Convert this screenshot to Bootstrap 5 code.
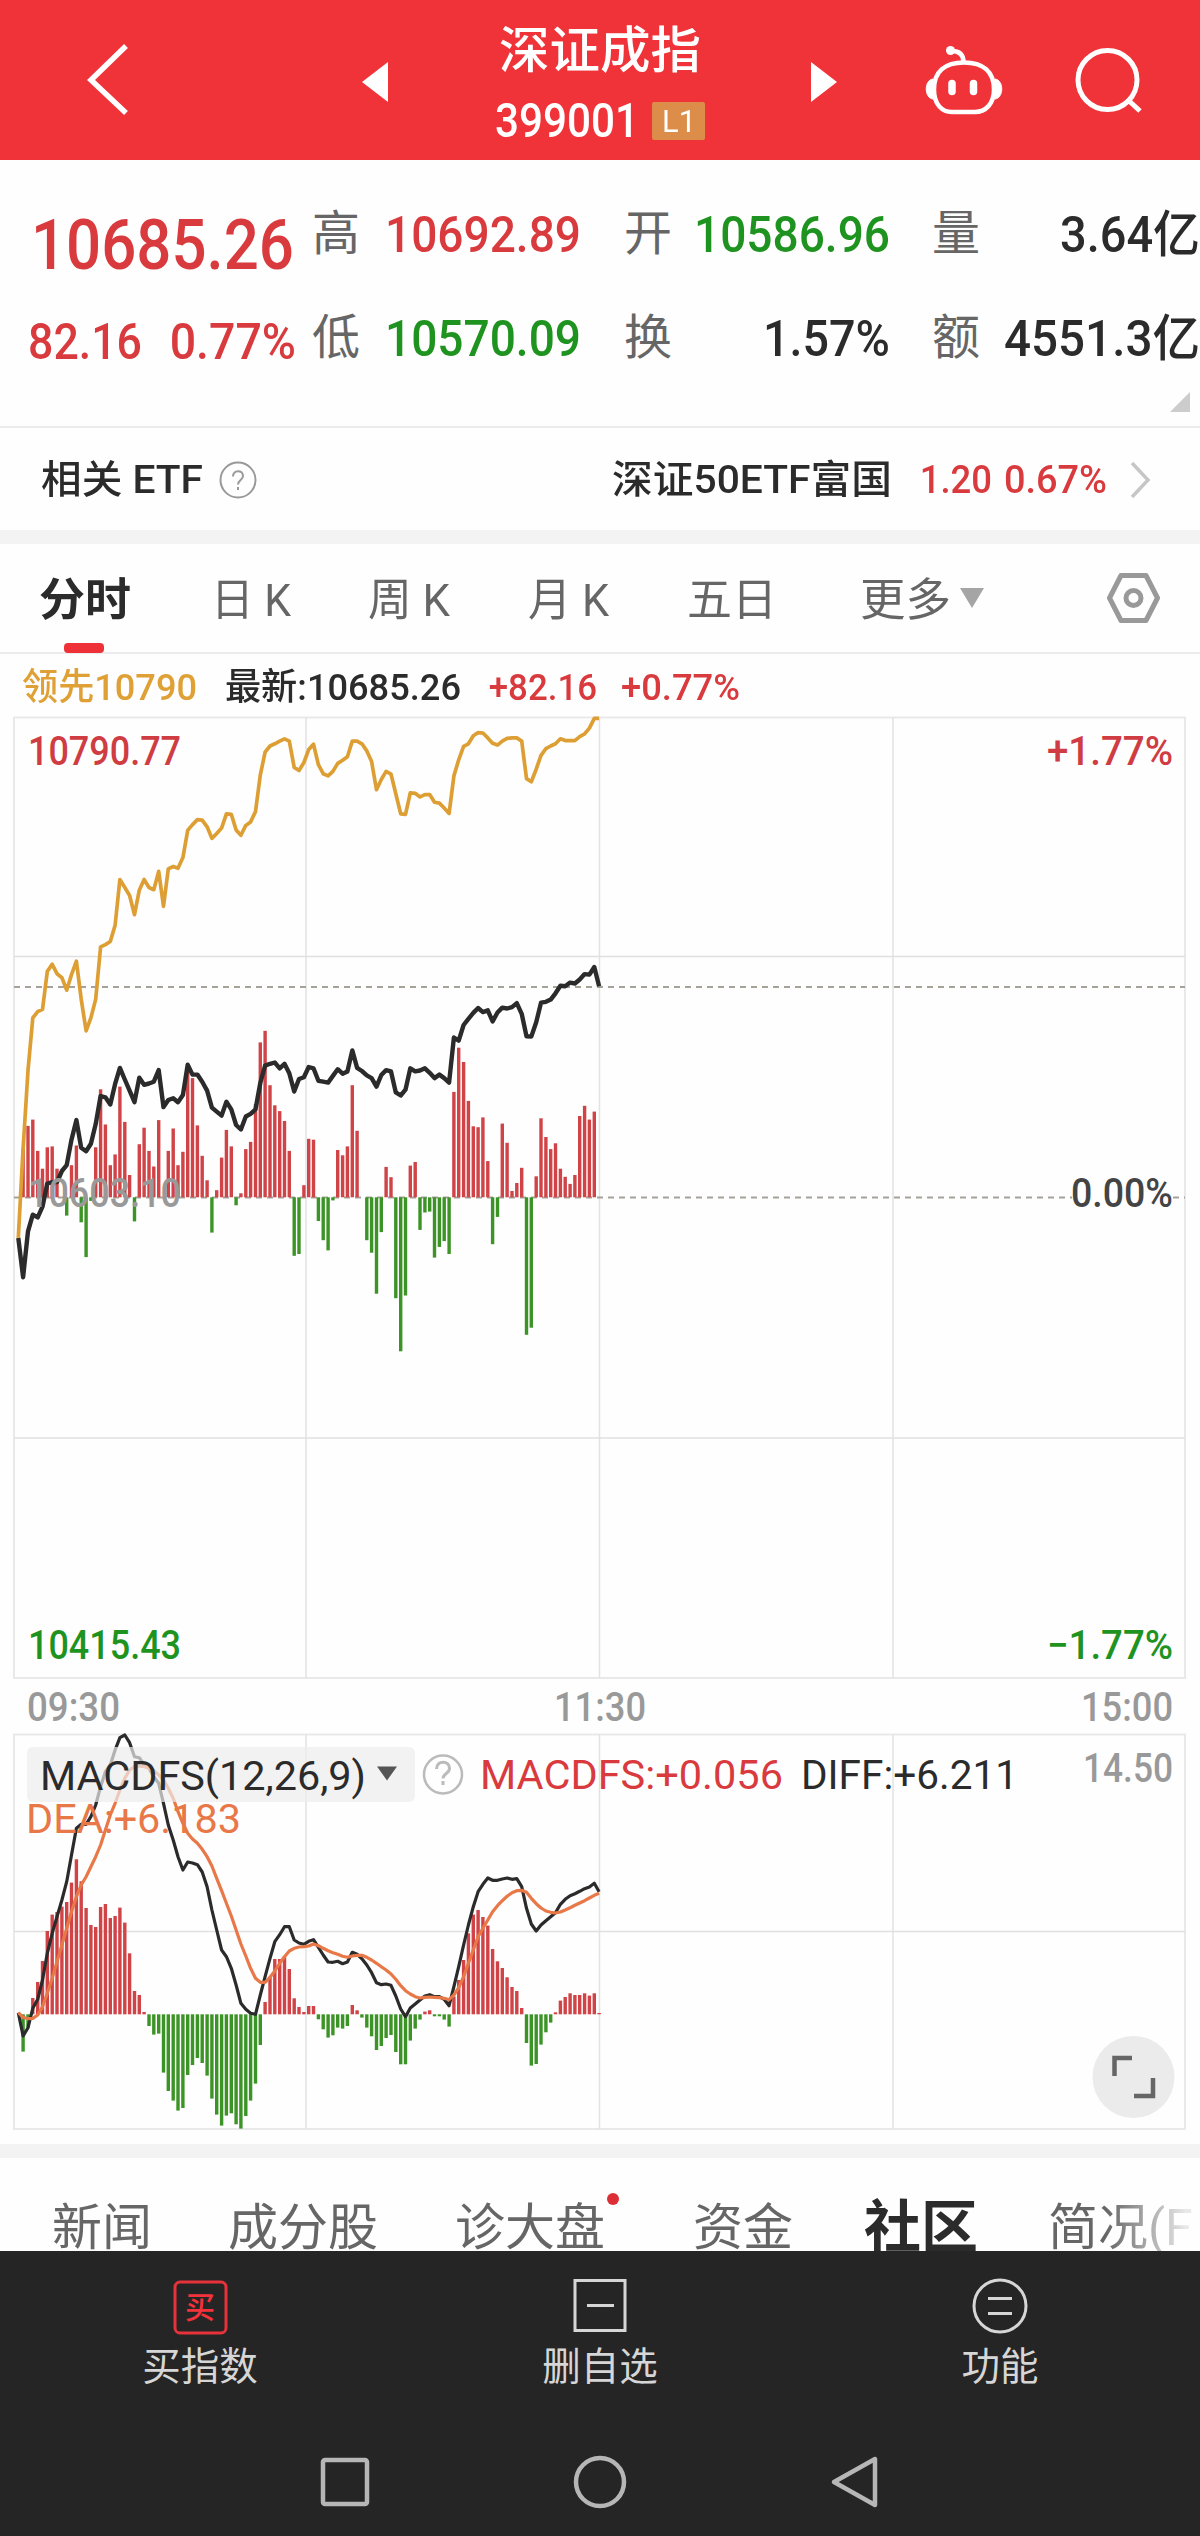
<!DOCTYPE html>
<html lang="zh-CN">
<head>
  <meta charset="utf-8" />
  <meta name="viewport" content="width=device-width, initial-scale=1" />
  <title>深证成指 399001</title>
  <link href="https://cdn.jsdelivr.net/npm/bootstrap@5.3.3/dist/css/bootstrap.min.css" rel="stylesheet" />

  <style>
    :root {
      --up: #d93a3e;
      --down: #1f931f;
      --ink: #2b2b2b;
      --soft: #666;
      --dim: #999;
    }
    body {
      font-family: Roboto, "Noto Sans CJK SC", sans-serif;
      background-color: #fefefe;
      color: var(--ink);
      width: 1200px;
      height: 2536px;
      overflow: hidden;
      line-height: 1;
    }
    svg { display: block; flex: none; }
    .up { color: var(--up); }
    .down { color: var(--down); }
    .fit {
      display: inline-block;
      white-space: nowrap;
      transform-origin: 0 50%;
    }
    .num { font-weight: 500; }

    .topbar { height: 160px; background-color: #f03239; grid-template-columns: 440px 320px 440px; }
    .topbar .index-name { font-size: 50px; font-weight: 500; line-height: 62px; padding-top: 20px; }
    .topbar .index-code { font-size: 48px; height: 40px; margin-top: 19px; }
    .level { background-color: #dd8d4a; width: 53px; height: 38px; margin-left: 13px; font-size: 32px; border-radius: 2px; }

    .quotes {
      height: 268px;
      padding-top: 23px;
      border-bottom: 2px solid #ececec;
      grid-template-columns: 312px 50px 219px 93px 216px 92px 218px;
      grid-template-rows: 104px 104px;
      align-items: center;
      font-size: 50px;
    }
    .quotes .tag { font-size: 48px; color: var(--soft); text-align: right; padding-right: 2px; line-height: 60px; padding-bottom: 2px; }
    .quotes .val { text-align: right; }
    .last-price { font-size: 70px; padding: 20px 0 0 31px; }
    .change { padding: 6px 0 0 28px; }
    .corner { right: 10px; bottom: 14px; }

    .etf { height: 102px; font-size: 39px; padding: 2px 49px 0 41px; }
    .etf .name { font-family: "Noto Sans CJK SC", sans-serif; }
    .band { height: 14px; background-color: #f3f3f3; }

    .periods {
      height: 110px;
      padding-left: 39px;
      border-bottom: 2px solid #ececec;
      grid-template-columns: 172px 157px 160px 159px 173px 247px auto;
      align-items: center;
      font-size: 45px;
      color: var(--soft);
    }
    .periods > div { padding-top: 4px; }
    .periods .current { color: var(--ink); font-weight: 700; }
    .underbar { left: 25px; bottom: -30px; width: 40px; height: 10px; border-radius: 4px; background-color: #ee3138; }

    .legend-line { height: 62px; font-size: 37px; padding: 5px 0 0 22px; }
    .gold { color: #dfa036; }

    .sections {
      height: 93px;
      overflow: hidden;
      padding: 35px 0 0 52px;
      grid-template-columns: 176px 227px 238px 171px 184px 152px;
      font-size: 50px;
      line-height: 70px;
      color: var(--soft);
    }
    .sections .current { color: var(--ink); font-weight: 700; font-size: 57px; }
    .dot { right: -14px; top: -6px; width: 12px; height: 12px; background-color: #dc2f35; }
    .fade-end {
      background: linear-gradient(90deg, #666 40%, #e8e8e8 95%);
      -webkit-background-clip: text;
      background-clip: text;
      color: transparent;
    }

    .actions { height: 155px; background-color: #252525; color: #d6d6d6; font-size: 38.500px; padding-top: 26px; }
    .actions .col { line-height: 60px; }
    .sysnav { height: 130px; background-color: #252525; }
    svg text { font-family: Roboto, "Noto Sans CJK SC", sans-serif; font-weight: 500; }
    #macdChart .light-label { font-weight: 400; }
  </style>
</head>
<body>

  <header class="topbar d-grid text-white">
    <div class="d-flex align-items-center justify-content-between">
      <svg class="ms-5" width="100" height="160" fill="none" stroke="#fff" stroke-width="5.500"><path d="M78 46 43 80l35 33" /></svg>
      <svg width="80" height="160" fill="#fff"><path d="M2 82 28 62v40z" /></svg>
    </div>
    <div class="text-center">
      <div class="index-name"><span class="fit" data-w="202">深证成指</span></div>
      <div class="index-code d-flex justify-content-center align-items-center">
        <span class="fit num" data-w="144">399001</span>
        <span class="level d-inline-flex justify-content-center align-items-center"><span class="fit" data-w="34">L1</span></span>
      </div>
    </div>
    <svg width="440" height="160" fill="none" stroke="#fff" stroke-width="4.5">
      <path d="M51 62v40l26-20z" fill="#fff" stroke="none" />
      <path d="M204 62.500c19 0 30 9 30 27 0 15-9 22.500-19 22.500h-23c-10 0-18-7.500-18-22.500 0-18 11-27 30-27z" />
      <path d="M173 79c-9 1-9 19 0 20zM235 79c9 1 9 19 0 20z" fill="#fff" stroke-width="1" />
      <path d="M203.500 62c0-7-4-11-12-11" />
      <circle cx="190.500" cy="50.500" r="4.500" fill="#fff" stroke="none" />
      <path d="M192 83.500v8M213.500 83.500v8" stroke-width="7.500" stroke-linecap="round" />
      <circle cx="347.500" cy="80" r="29.500" stroke-width="5" />
      <path d="m367 99 13 12" stroke-width="5" />
    </svg>
  </header>

  <section class="quotes d-grid position-relative">
    <div class="last-price up"><span class="fit num" data-w="263">10685.26</span></div>
    <div class="tag">高</div>
    <div class="val up"><span class="fit num" data-w="196">10692.89</span></div>
    <div class="tag">开</div>
    <div class="val down"><span class="fit num" data-w="196">10586.96</span></div>
    <div class="tag">量</div>
    <div class="val"><span class="fit num" data-w="140">3.64亿</span></div>
    <div class="change up num"><span class="fit" data-w="114">82.16</span><span class="fit ms-4 ps-1" data-w="126">0.77%</span></div>
    <div class="tag">低</div>
    <div class="val down"><span class="fit num" data-w="196">10570.09</span></div>
    <div class="tag">换</div>
    <div class="val"><span class="fit num" data-w="127">1.57%</span></div>
    <div class="tag">额</div>
    <div class="val"><span class="fit num" data-w="196">4551.3亿</span></div>
    <svg class="corner position-absolute" width="20" height="20" fill="#ccc"><path d="M20 0v20H0z" /></svg>
  </section>

  <section class="etf d-flex align-items-center">
    <span class="fit num" data-w="162">相关 ETF</span>
    <svg class="ms-3" width="38" height="38" fill="none" stroke="#999" stroke-width="2">
      <circle cx="19" cy="19" r="17.5" />
      <path d="M14 15.500c0-7 10-7 10-.5 0 4-5 4-5 8.500M19 26v3" />
    </svg>
    <span class="fit num ms-auto" data-w="280">深证50ETF富国</span>
    <span class="fit num up ms-4 ps-1" data-w="72">1.20</span>
    <span class="fit num up ms-2 ps-1" data-w="103">0.67%</span>
    <svg class="ms-4" width="20" height="38" fill="none" stroke="#c6c6c6" stroke-width="3.500"><path d="m1 2 16 17L1 36" /></svg>
  </section>
  <div class="band"></div>

  <nav class="periods d-grid">
    <div class="current position-relative"><span class="fit" data-w="92">分时</span><span class="underbar position-absolute"></span></div>
    <div><span class="fit" data-w="80">日 K</span></div>
    <div><span class="fit" data-w="82">周 K</span></div>
    <div><span class="fit" data-w="81">月 K</span></div>
    <div><span class="fit" data-w="90">五日</span></div>
    <div class="d-flex align-items-center"><span class="fit" data-w="91">更多</span>
      <svg class="ms-2 mb-1" width="26" height="22" fill="#a5a5a5"><path d="M1 1h24L13 21z" /></svg>
    </div>
    <svg width="54" height="54" fill="none" stroke="#999" stroke-width="5"><path d="M14 4.500h25l11.500 22.500L39 49.500H14L2.500 27z" stroke-linejoin="round" /><circle cx="26.500" cy="27" r="7.500" /></svg>
  </nav>

  <div class="legend-line d-flex align-items-center">
    <span class="fit gold num" data-w="175">领先10790</span>
    <span class="fit num ms-4 ps-1" data-w="236">最新:10685.26</span>
    <span class="fit num up ms-4 ps-1" data-w="108">+82.16</span>
    <span class="fit num up ms-4" data-w="119">+0.77%</span>
  </div>

  <svg id="priceChart" width="1200" height="964" viewBox="0 716 1200 964"></svg>
  <svg id="macdChart" width="1200" height="464" viewBox="0 1680 1200 464"></svg>
  <div class="band"></div>

  <nav class="sections d-grid">
    <div>新闻</div>
    <div>成分股</div>
    <div><span class="position-relative">诊大盘<span class="dot position-absolute rounded-circle"></span></span></div>
    <div>资金</div>
    <div class="current">社区</div>
    <div><span class="fade-end">简况(F</span></div>
  </nav>

  <footer>
    <div class="actions row g-0 text-center">
      <div class="col">
        <svg class="mx-auto" width="56" height="60" fill="none" stroke="#e8323b" stroke-width="3">
          <rect x="3" y="5" width="51" height="51" rx="5" />
          <text x="28" y="41" font-size="30" text-anchor="middle" fill="#f4323c" stroke="none">买</text>
        </svg>
        <div>买指数</div>
      </div>
      <div class="col">
        <svg class="mx-auto" width="56" height="60" fill="none" stroke="#d6d6d6" stroke-width="3">
          <rect x="3" y="3.500" width="50" height="50" />
          <path d="M15 28.500h27" />
        </svg>
        <div>删自选</div>
      </div>
      <div class="col">
        <svg class="mx-auto" width="56" height="60" fill="none" stroke="#d6d6d6" stroke-width="3">
          <circle cx="28" cy="29" r="26" />
          <path d="M16 21.500h24M16 36.500h24" />
        </svg>
        <div>功能</div>
      </div>
    </div>
    <div class="sysnav">
      <svg width="1200" height="130" fill="none" stroke="#b6b6b6" stroke-width="4.500" stroke-linejoin="round">
        <rect x="323" y="54" width="44" height="44" rx="2" />
        <circle cx="600" cy="76" r="24" />
        <path d="M834 76 875 53v46z" />
      </svg>
    </div>
  </footer>

  <script>
    function fitTexts() {
      document.querySelectorAll('.fit').forEach(el => {
        const cs = getComputedStyle(el);
        const pad = parseFloat(cs.paddingLeft);
        const target = Number(el.dataset.w) + pad;
        const natural = el.getBoundingClientRect().width;
        el.style.transform = `scaleX(${target / natural})`;
        el.style.marginRight = `${target - natural}px`;
      });
    }

    const X0 = 18.3, STEP = 4.84;
    const xAt = i => X0 + STEP * i;

    const leading = [1205,1005,830,712,698,693,608,592,613,622,650,615,585,670,741,712,670,553,548,541,505,402,420,438,481,426,402,420,425,384,462,378,373,377,353,292,279,268,269,284,310,299,287,255,256,291,303,281,273,250,168,117,103,98,92,87,92,151,158,140,111,99,145,165,170,160,142,135,127,92,92,98,114,138,201,178,160,166,210,255,256,208,209,217,212,212,229,231,242,254,170,134,104,98,80,73,74,85,97,101,92,86,85,85,92,176,183,155,124,109,103,98,87,91,91,91,82,76,63,41,41];
    const latest = [1205,1293,1190,1153,1159,1135,1083,1080,1080,1055,1042,985,941,1003,1011,994,950,887,890,906,860,824,850,875,901,846,862,859,855,829,912,896,892,901,885,817,839,839,855,875,913,922,931,900,917,952,962,933,927,917,858,819,815,812,825,815,836,877,849,845,822,825,853,855,857,842,827,837,832,785,824,831,841,847,866,840,829,832,879,886,873,825,832,830,825,835,847,839,847,857,756,763,728,714,701,690,699,695,720,700,689,691,688,679,703,753,754,722,678,676,671,657,640,641,633,635,626,614,615,598,641];
    const force = [0,109,160,174,104,64,112,114,64,0,-41,72,116,-56,-134,-8,112,242,163,72,96,248,169,50,-54,119,156,104,69,173,0,104,154,72,102,284,267,161,93,38,-79,16,89,151,114,-18,9,108,124,209,347,373,251,206,193,171,104,-131,-127,27,131,129,-53,-96,-119,-7,106,94,114,251,149,0,-96,-124,-216,-78,68,45,-226,-345,-220,71,79,-73,-34,-32,-135,-111,-98,-127,236,335,303,216,159,157,179,81,-105,-44,165,122,14,32,66,-308,-292,47,177,135,108,121,64,46,30,50,182,205,174,192];

    const diff = [1118,1188,1163,1105,1078,1020,940,880,830,780,725,645,565,553,553,530,495,440,395,375,330,293,285,308,350,353,375,385,410,430,490,555,600,650,690,666,669,674,696,740,810,870,930,950,985,1035,1090,1108,1120,1123,1065,1010,955,905,884,860,860,900,909,913,904,899,922,945,966,967,964,971,966,937,943,956,975,998,1028,1034,1032,1036,1068,1107,1130,1104,1092,1080,1068,1064,1070,1070,1078,1097,1040,980,915,855,800,755,733,714,721,721,717,714,718,716,740,805,852,873,855,842,830,818,793,778,767,761,754,746,741,730,755];
    const dea = [1118,1132,1136,1135,1125,1100,1060,1015,965,915,865,815,770,735,710,680,650,615,570,525,490,450,415,390,380,378,380,385,392,404,420,445,475,515,550,580,597,610,628,650,678,715,752,790,828,870,912,948,985,1015,1027,1027,1012,993,970,950,933,925,921,920,918,912,917,925,932,938,943,949,952,948,946,946,952,960,970,980,990,1002,1018,1037,1052,1062,1070,1074,1072,1071,1072,1073,1075,1079,1065,1043,1010,970,930,890,865,840,815,797,782,769,758,752,751,757,775,791,804,813,817,819,816,810,803,796,789,782,774,766,760];
    const macd = [0,-112,-40,49,97,160,250,299,307,323,337,395,465,399,319,268,262,322,331,289,295,320,275,183,70,58,7,-35,-61,-58,-175,-230,-259,-289,-281,-182,-152,-131,-146,-184,-253,-301,-334,-304,-297,-330,-343,-305,-259,-208,-92,37,113,166,166,173,136,48,22,7,25,25,-15,-45,-70,-63,-40,-43,-35,28,12,-10,-40,-66,-107,-95,-71,-62,-113,-150,-150,-79,-43,-16,8,12,-6,-6,-16,-37,53,103,163,243,299,313,292,266,196,159,139,111,82,70,19,-86,-154,-149,-91,-54,-25,6,41,52,63,58,58,63,56,63,4];

    function bars(values, base, unit) {
      return values.map((v, i) => {
        if (!v) return '';
        const h = Math.abs(v) * unit;
        const y = v > 0 ? base - h : base;
        return `<rect x="${(xAt(i) - 1.7).toFixed(1)}" y="${y.toFixed(1)}" width="3.4" height="${h.toFixed(1)}" fill="${v > 0 ? '#d04347' : '#3c9427'}"/>`;
      }).join('');
    }

    function line(values, top, unit, color, width) {
      const pts = values.map((v, i) => `${xAt(i).toFixed(1)},${(top + v * unit).toFixed(1)}`).join(' ');
      return `<polyline points="${pts}" fill="none" stroke="${color}" stroke-width="${width}" stroke-linejoin="round"/>`;
    }

    function label(x1, x2, y, text, color, size = 40, cls = '') {
      return `<text class="${cls}" x="${x1}" y="${y}" font-size="${size}" fill="${color}" textLength="${x2 - x1}" lengthAdjust="spacingAndGlyphs">${text}</text>`;
    }

    function frame(top, bottom, rows) {
      let s = `<rect x="14" y="${top}" width="1171" height="${bottom - top}" fill="none" stroke="#e9e9e9" stroke-width="2"/>`;
      [306, 599.5, 893].forEach(x => s += `<path d="M${x} ${top}V${bottom}" stroke="#e2e2e2" stroke-width="1.500"/>`);
      rows.forEach(y => s += `<path d="M14 ${y}H1185" stroke="#e0e0e0" stroke-width="1.500"/>`);
      return s;
    }

    document.getElementById('priceChart').innerHTML =
      frame(717.5, 1678, [956.5, 1438]) +
      '<path d="M14 987H1185M14 1197.500H1072" stroke="#a5a299" stroke-width="2" stroke-dasharray="6 5"/><path d="M1173 1197.500h12" stroke="#a5a299" stroke-width="2" stroke-dasharray="6 5"/>' +
      bars(force, 1197.3, 1 / 2.24) +
      line(leading, 700, 1 / 2.24, '#dd9f34', 3.7) +
      line(latest, 700, 1 / 2.24, '#2b2b2b', 4.4) +
      label(28, 181, 765, '10790.77', '#cf3c42') +
      label(1047, 1173, 765, '+1.77%', '#cf3c42') +
      label(28, 181, 1207, '10603.10', '#999') +
      label(1071, 1173, 1207, '0.00%', '#444') +
      label(28, 181, 1659, '10415.43', '#1f931f') +
      label(1047, 1173, 1659, '−1.77%', '#1f931f');

    document.getElementById('macdChart').innerHTML =
      label(27, 120, 1721, '09:30', '#999') +
      label(554, 646, 1721, '11:30', '#999') +
      label(1081, 1173, 1721, '15:00', '#999') +
      frame(1734.5, 2129, [1931.5]) +
      bars(macd, 2014.3, 1 / 3) +
      line(diff, 1640, 1 / 3, '#2b2b2b', 3.2) +
      line(dea, 1640, 1 / 3, '#e87848', 3.2) +
      '<rect x="27" y="1747" width="388" height="55" rx="6" fill="#ececec" fill-opacity=".7"/>' +
      label(40, 366, 1790, 'MACDFS(12,26,9)', '#2b2b2b', 41, 'light-label') +
      '<path d="M377 1766.500h20l-10 14z" fill="#555"/>' +
      '<circle cx="443" cy="1774.500" r="19" fill="none" stroke="#bbb" stroke-width="2.500"/><path d="M436.500 1769c0-9 13-9 13-.5 0 5-6.500 5-6.500 10M443 1781v4" fill="none" stroke="#bbb" stroke-width="3"/>' +
      label(480, 783, 1788.5, 'MACDFS:+0.056', '#d93a3e', 41, 'light-label') +
      label(801, 1018, 1788.5, 'DIFF:+6.211', '#2b2b2b', 41, 'light-label') +
      label(1083, 1173, 1781.5, '14.50', '#999') +
      label(26, 241, 1833, 'DEA:+6.183', '#e87848', 41, 'light-label') +
      '<circle cx="1133.500" cy="2077" r="41" fill="#ebebeb"/><path d="M1114.500 2076v-18h17.500M1134 2096h19v-18" fill="none" stroke="#666" stroke-width="4.500"/>';

    fitTexts();
  </script>

  <script src="https://cdn.jsdelivr.net/npm/bootstrap@5.3.3/dist/js/bootstrap.bundle.min.js"></script>
</body>
</html>
